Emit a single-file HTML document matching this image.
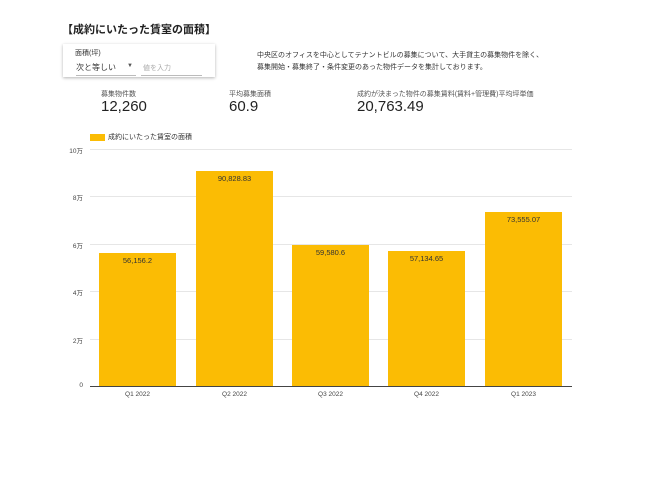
<!DOCTYPE html><html><head><meta charset="utf-8"><style>
body{margin:0;width:650px;height:487px;background:#fff;font-family:"Liberation Sans","Noto Sans CJK JP",sans-serif;position:relative;overflow:hidden;color:#222}
.a{position:absolute;white-space:nowrap}
.bar{position:absolute;background:#fbbc04;width:77px}
.bl{position:absolute;width:77px;text-align:center;font-size:7.5px;color:#333}
.g{position:absolute;left:90px;width:482px;height:1px;background:#e6e6e6}
.yl{position:absolute;right:567px;font-size:6.5px;color:#444}
.xl{position:absolute;width:77px;text-align:center;font-size:6.5px;color:#444;top:391px}
</style></head><body>
<div class="a" style="left:62px;top:21px;font-size:11px;font-weight:bold">【成約にいたった賃室の面積】</div>
<div class="a" style="left:63px;top:44px;width:152px;height:33px;box-shadow:0 1px 3px rgba(0,0,0,.3);background:#fff"></div>
<div class="a" style="left:75px;top:48px;font-size:7px;color:#333">面積(坪)</div>
<div class="a" style="left:76px;top:62px;font-size:8px;color:#333">次と等しい</div>
<div class="a" style="left:127px;top:63px;font-size:6px;color:#555">▼</div>
<div class="a" style="left:76px;top:75px;width:60px;height:1px;background:#bbb"></div>
<div class="a" style="left:143px;top:63px;font-size:7px;color:#aaa">値を入力</div>
<div class="a" style="left:141px;top:75px;width:61px;height:1px;background:#bbb"></div>
<div class="a" style="left:257px;top:50px;font-size:7px;color:#333;line-height:12px">中央区のオフィスを中心としてテナントビルの募集について、大手貸主の募集物件を除く、<br>募集開始・募集終了・条件変更のあった物件データを集計しております。</div>
<div class="a" style="left:101px;top:89px;font-size:7px;color:#555">募集物件数</div>
<div class="a" style="left:101px;top:98px;font-size:15px">12,260</div>
<div class="a" style="left:229px;top:89px;font-size:7px;color:#555">平均募集面積</div>
<div class="a" style="left:229px;top:98px;font-size:15px">60.9</div>
<div class="a" style="left:357px;top:89px;font-size:7px;color:#555">成約が決まった物件の募集賃料(賃料+管理費)平均坪単価</div>
<div class="a" style="left:357px;top:98px;font-size:15px">20,763.49</div>
<div class="a" style="left:90px;top:134px;width:15px;height:7px;background:#fbbc04"></div>
<div class="a" style="left:108px;top:132px;font-size:7px;color:#333">成約にいたった賃室の面積</div>
<div class="g" style="top:149px"></div><div class="g" style="top:196px"></div><div class="g" style="top:244px"></div><div class="g" style="top:291px"></div><div class="g" style="top:339px"></div>
<div class="g" style="top:386px;background:#444"></div>
<div class="yl" style="top:145px">10万</div><div class="yl" style="top:192px">8万</div><div class="yl" style="top:240px">6万</div><div class="yl" style="top:287px">4万</div><div class="yl" style="top:335px">2万</div><div class="yl" style="top:382px">0</div>
<div class="bar" style="left:99px;top:253px;height:133px"></div><div class="bl" style="left:99px;top:256px">56,156.2</div>
<div class="bar" style="left:196px;top:171px;height:215px"></div><div class="bl" style="left:196px;top:174px">90,828.83</div>
<div class="bar" style="left:292px;top:245px;height:141px"></div><div class="bl" style="left:292px;top:248px">59,580.6</div>
<div class="bar" style="left:388px;top:251px;height:135px"></div><div class="bl" style="left:388px;top:254px">57,134.65</div>
<div class="bar" style="left:485px;top:212px;height:174px"></div><div class="bl" style="left:485px;top:215px">73,555.07</div>
<div class="xl" style="left:99px">Q1 2022</div><div class="xl" style="left:196px">Q2 2022</div><div class="xl" style="left:292px">Q3 2022</div><div class="xl" style="left:388px">Q4 2022</div><div class="xl" style="left:485px">Q1 2023</div>
</body></html>
